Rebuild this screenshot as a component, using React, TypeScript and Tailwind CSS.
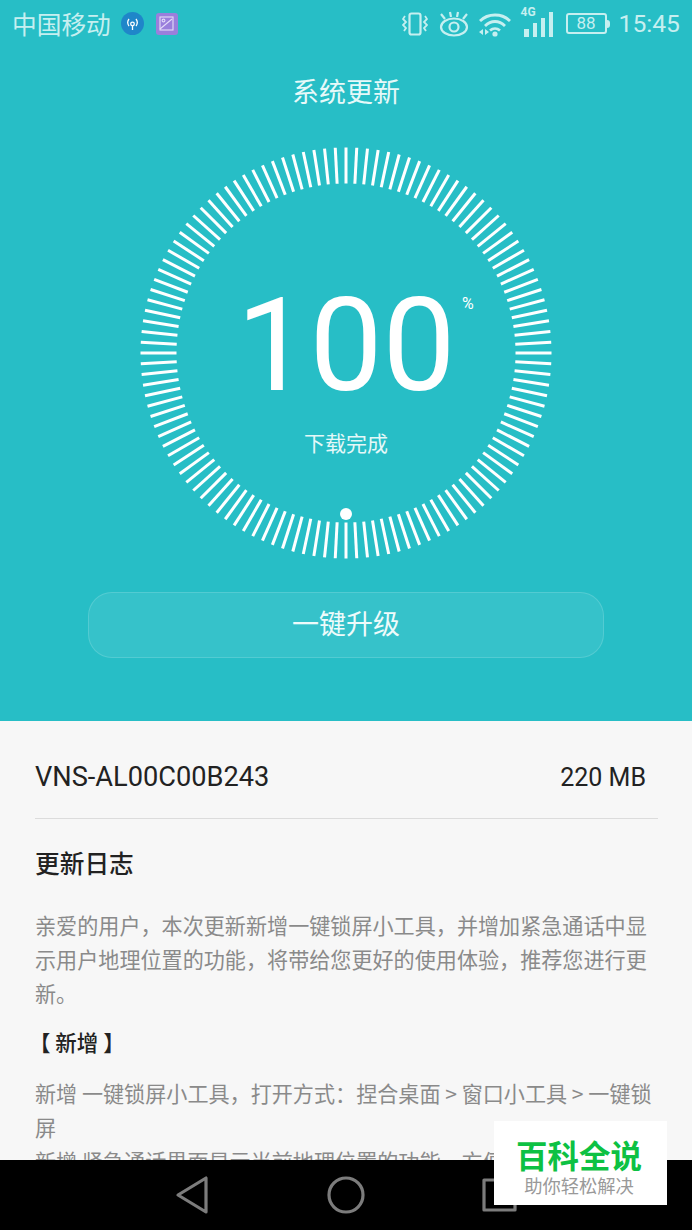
const ticks = Array.from({ length: 120 }, (_, i) => i * 3);

function VibrateIcon() {
  return (
    <svg width="26" height="24" viewBox="0 0 26 24" fill="none" stroke="currentColor" strokeWidth="2.2">
      <rect x="7.5" y="1.5" width="11" height="21" rx="2" />
      <path d="M3 4 L1 7 L4 10 L1 13 L4 16 L2 19" strokeWidth="1.8" />
      <path d="M23 4 L25 7 L22 10 L25 13 L22 16 L24 19" strokeWidth="1.8" />
    </svg>
  );
}

function EyeIcon() {
  return (
    <svg width="32" height="26" viewBox="0 0 32 26" fill="none" stroke="currentColor" strokeWidth="2.2">
      <ellipse cx="16" cy="16" rx="13" ry="8.5" />
      <circle cx="16" cy="16" r="4.5" />
      <path d="M3 3 L7 8 M12 1 L13 6 M20 1 L19 6 M29 3 L25 8" />
    </svg>
  );
}

function WifiIcon() {
  return (
    <svg width="34" height="26" viewBox="0 0 34 26" fill="none" stroke="currentColor" strokeWidth="2.8">
      <path d="M2 10 C10 2 24 2 32 10" />
      <path d="M7 15 C13 9 21 9 27 15" />
      <path d="M12 19.5 C15 17 19 17 22 19.5" />
      <circle cx="17" cy="23" r="2.6" fill="currentColor" stroke="none" />
      <path d="M1 21 L5 18 V24 Z M11 21 L7 18 V24 Z" fill="currentColor" stroke="none" />
    </svg>
  );
}

function SignalIcon() {
  return (
    <div className="relative h-[30px] w-[32px]">
      <span className="absolute left-0 top-[-1px] font-['Roboto'] text-[12px] font-bold leading-none">4G</span>
      <div className="absolute bottom-0 left-[3px] flex items-end gap-[4px]">
        <div className="h-[8px] w-[5px] bg-current" />
        <div className="h-[14px] w-[4px] bg-current" />
        <div className="h-[19px] w-[4px] bg-current" />
        <div className="h-[25px] w-[4px] bg-current" />
      </div>
    </div>
  );
}

function BatteryIcon() {
  return (
    <div className="flex items-center">
      <div className="flex h-[21px] w-[41px] items-center justify-center rounded-[3px] border-2 border-current font-['Roboto'] text-[17px] leading-none">
        88
      </div>
      <div className="h-[8px] w-[3px] rounded-r-sm bg-current" />
    </div>
  );
}

function Dial() {
  return (
    <div className="relative h-[412px] w-[412px]">
      <svg width="412" height="412" viewBox="0 0 412 412">
        {ticks.map((deg) => (
          <line
            key={deg}
            x1="206"
            y1="0.5"
            x2="206"
            y2="36.5"
            stroke="#ffffff"
            strokeWidth="3"
            transform={`rotate(${deg} 206 206)`}
          />
        ))}
        <circle cx="206" cy="367" r="6" fill="#ffffff" />
      </svg>
      <div className="absolute left-0 right-0 top-[133px] text-center font-['Roboto'] text-[130px] font-normal leading-[131px] text-white">
        100
      </div>
      <div className="absolute left-[322px] top-[148px] font-['Roboto'] text-[16px] leading-[18px] text-white">%</div>
      <div className="absolute left-0 right-0 top-[279px] text-center text-[21px] leading-[32px] text-[#e4f8f8]">
        下载完成
      </div>
    </div>
  );
}

function NavBar() {
  return (
    <div className="flex h-[70px] items-center justify-center gap-[110px] bg-black text-[#7c7c7c]">
      <svg width="44" height="40" viewBox="0 0 44 40" fill="none" stroke="currentColor" strokeWidth="3.2" strokeLinejoin="round">
        <path d="M36 3 V37 L8 20 Z" />
      </svg>
      <svg width="44" height="40" viewBox="0 0 44 40" fill="none" stroke="currentColor" strokeWidth="3.2">
        <circle cx="22" cy="20" r="17" />
      </svg>
      <svg width="44" height="40" viewBox="0 0 44 40" fill="none" stroke="currentColor" strokeWidth="3.2" strokeLinejoin="round">
        <rect x="6" y="5" width="31" height="30" />
      </svg>
    </div>
  );
}

export default function App() {
  return (
    <div className="relative flex h-[1230px] w-[692px] flex-col overflow-hidden bg-[#f7f7f7] font-['Noto_Sans_CJK_SC','Roboto',sans-serif]">
      <div className="flex h-[721px] shrink-0 flex-col items-center bg-[#27bec6]">
        <div className="flex h-[47px] w-full items-center justify-between pl-[12px] pr-[12px] text-[#c6eff0]">
          <div className="flex items-center">
            <span className="text-[24.7px] leading-[47px]">中国移动</span>
            <div className="ml-[10px] flex h-[23px] w-[23px] items-center justify-center rounded-full bg-[#1f86c9] text-white">
              <svg width="17" height="17" viewBox="0 0 17 17" fill="none" stroke="currentColor" strokeWidth="1.3">
                <circle cx="8.5" cy="9" r="1.8" />
                <path d="M8.5 11 V15 M5 4 C3.5 6 3.5 9 5 11 M12 4 C13.5 6 13.5 9 12 11" />
              </svg>
            </div>
            <div className="ml-[12px] flex h-[22px] w-[22px] items-center justify-center rounded-[3px] bg-[#9a7fdc] text-[#e4dcf8]">
              <svg width="15" height="15" viewBox="0 0 15 15" fill="none" stroke="currentColor" strokeWidth="1.1">
                <rect x="1" y="1" width="13" height="13" />
                <circle cx="4.5" cy="4.5" r="1.4" />
                <path d="M1 13 L13 3" />
              </svg>
            </div>
          </div>
          <div className="flex items-center">
            <VibrateIcon />
            <div className="ml-[10px]"><EyeIcon /></div>
            <div className="ml-[8px]"><WifiIcon /></div>
            <div className="ml-[9px] mb-[4px]"><SignalIcon /></div>
            <div className="ml-[13px]"><BatteryIcon /></div>
            <span className="ml-[9px] font-['Roboto'] text-[24.7px] leading-[47px]">15:45</span>
          </div>
        </div>
        <div className="mt-[25px] text-[27px] leading-[38px] text-[#e6f9f9]">系统更新</div>
        <div className="mt-[37px]">
          <Dial />
        </div>
        <div className="mt-[33px] flex h-[66px] w-[516px] items-center justify-center rounded-[24px] border border-white/15 bg-white/[0.07] pb-[3px] text-[27px] text-[#eefbfb]">
          一键升级
        </div>
      </div>

      <div className="min-h-0 flex-1 overflow-hidden px-[35px]">
        <div className="mr-[-1px] flex h-[98px] items-center justify-between border-b border-[#dcdcdc] pr-[12px] pt-[16px] font-['Roboto'] text-[27.2px] text-[#222222]">
          <span>VNS-AL00C00B243</span>
          <span className="text-[25px]">220 MB</span>
        </div>
        <h2 className="mt-[23px] text-[24.7px] font-medium leading-[40px] text-[#222222]">更新日志</h2>
        <p className="mt-[26px] text-[21.1px] leading-[34px] text-[#8a8a8a]">
          亲爱的用户，本次更新新增一键锁屏小工具，并增加紧急通话中显示用户地理位置的功能，将带给您更好的使用体验，推荐您进行更新。
        </p>
        <h3 className="ml-[-6px] mt-[15px] text-[21.5px] font-medium leading-[34px] text-[#222222]">【 新增 】</h3>
        <p className="mt-[17px] text-[21.1px] leading-[34px] text-[#8a8a8a]">
          新增 一键锁屏小工具，打开方式：捏合桌面 &gt; 窗口小工具 &gt; 一键锁屏
          <br />
          新增 紧急通话界面显示当前地理位置的功能，方便您告知对方
        </p>
      </div>

      <NavBar />

      <div className="absolute left-[494px] top-[1121px] flex h-[84px] w-[173px] flex-col items-center bg-white pr-[3px]">
        <div className="mt-[13px] text-[31.5px] font-bold leading-[40px] text-[#0dc143]">百科全说</div>
        <div className="text-[18.3px] leading-[23px] text-[#999999]">助你轻松解决</div>
      </div>
    </div>
  );
}
